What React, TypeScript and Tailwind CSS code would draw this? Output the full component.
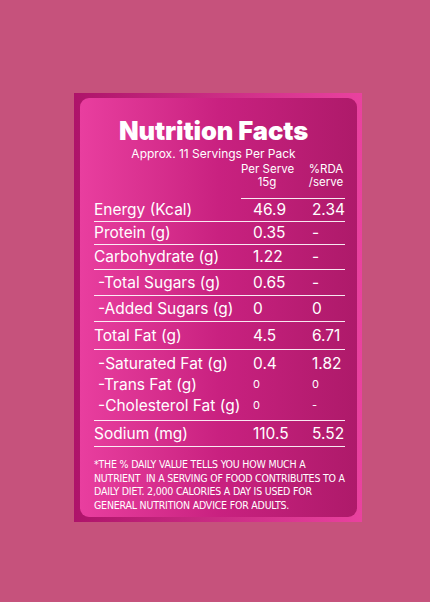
const rows = [
  { label: 'Energy (Kcal)', value: '46.9', rda: '2.34', h: 'h-[23px]' },
  { label: 'Protein (g)', value: '0.35', rda: '-', h: 'h-[23px]' },
  { label: 'Carbohydrate (g)', value: '1.22', rda: '-', h: 'h-[25px]' },
  { label: '-Total Sugars (g)', value: '0.65', rda: '-', h: 'h-[26px]', indent: true },
  { label: '-Added Sugars (g)', value: '0', rda: '0', h: 'h-[26px]', indent: true },
  { label: 'Total Fat (g)', value: '4.5', rda: '6.71', h: 'h-[28px]' },
]

const fats = [
  { label: '-Saturated Fat (g)', value: '0.4', rda: '1.82', small: false },
  { label: '-Trans Fat (g)', value: '0', rda: '0', small: true },
  { label: '-Cholesterol Fat (g)', value: '0', rda: '-', small: true },
]

export default function App() {
  return (
    <div className="min-h-[602px] w-full bg-[#c6527c] pt-[93px] pl-[74px] flex font-['Inter','Noto_Sans',sans-serif] text-white">
      <div className="w-[288px] h-[429px] p-[5px] pl-[6px] bg-gradient-to-r from-[#ae136a] to-[#e9429f]">
        <div className="h-full rounded-[9px] bg-gradient-to-r from-[#e93e9f] via-[#c92180] to-[#ae1a6a] pl-[14px] pr-[12px] pt-[20px]">
          <div className="text-center mr-[12px]">
            <div className="text-[25.5px] leading-[26px] font-black tracking-[-0.1px]">Nutrition Facts</div>
            <div className="text-[12px] leading-[14px] mt-[3px]">Approx. 11 Servings Per Pack</div>
          </div>
          <div className="flex justify-end mt-[2px]">
            <div className="flex w-[104px] border-b border-white/90 pb-[9px] text-[11.5px] leading-[13px] whitespace-nowrap">
              <div className="w-[52px] text-center">Per Serve<br />15g</div>
              <div className="w-[52px] pl-[14px] text-center">%RDA<br />/serve</div>
            </div>
          </div>
          {rows.map((r) => (
            <div key={r.label} className={`flex items-center ${r.h} border-b border-white/90 text-[15.5px]`}>
              <div className={`w-[159px] ${r.indent ? 'pl-[4px]' : ''}`}>{r.label}</div>
              <div className="w-[59px]">{r.value}</div>
              <div>{r.rda}</div>
            </div>
          ))}
          <div className="border-b border-white/90 pt-[3px] pb-[4px]">
            {fats.map((f) => (
              <div key={f.label} className="flex items-center h-[21px] text-[15.5px]">
                <div className="w-[159px] pl-[4px]">{f.label}</div>
                <div className={`w-[59px] ${f.small ? 'text-[11px]' : ''}`}>{f.value}</div>
                <div className={f.small ? 'text-[11px]' : ''}>{f.rda}</div>
              </div>
            ))}
          </div>
          <div className="flex items-center h-[26px] border-b border-white/90 text-[15.5px]">
            <div className="w-[159px]">Sodium (mg)</div>
            <div className="w-[59px]">110.5</div>
            <div>5.52</div>
          </div>
          <div className="mt-[11px] font-['DejaVu_Sans_Condensed','Liberation_Sans',sans-serif] font-normal text-[10.5px] leading-[13.5px] tracking-[-0.2px] whitespace-nowrap">
            *THE % DAILY VALUE TELLS YOU HOW MUCH A<br />
            NUTRIENT&nbsp; IN A SERVING OF FOOD CONTRIBUTES TO A<br />
            DAILY DIET. 2,000 CALORIES A DAY IS USED FOR<br />
            GENERAL NUTRITION ADVICE FOR ADULTS.
          </div>
        </div>
      </div>
    </div>
  )
}
